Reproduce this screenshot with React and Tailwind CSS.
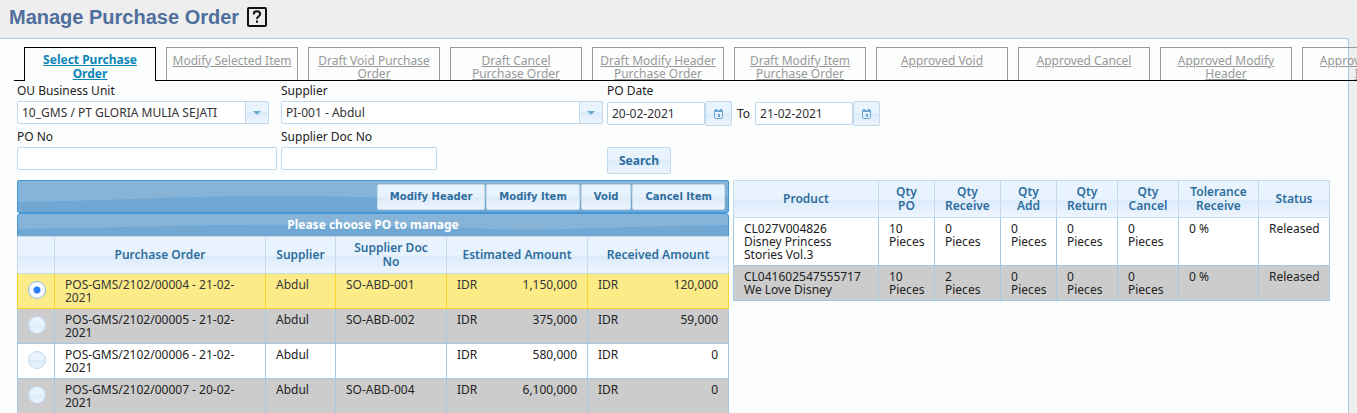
import { useState } from "react";

const TABS = [
    "Select Purchase Order",
    "Modify Selected Item",
    "Draft Void Purchase Order",
    "Draft Cancel Purchase Order",
    "Draft Modify Header Purchase Order",
    "Draft Modify Item Purchase Order",
    "Approved Void",
    "Approved Cancel",
    "Approved Modify Header",
    "Approved Modify Item",
];

const ORDERS = [
    { id: "POS-GMS/2102/00004 - 21-02-2021", supplier: "Abdul", doc: "SO-ABD-001", estimated: "1,150,000", received: "120,000" },
    { id: "POS-GMS/2102/00005 - 21-02-2021", supplier: "Abdul", doc: "SO-ABD-002", estimated: "375,000", received: "59,000" },
    { id: "POS-GMS/2102/00006 - 21-02-2021", supplier: "Abdul", doc: "", estimated: "580,000", received: "0" },
    { id: "POS-GMS/2102/00007 - 20-02-2021", supplier: "Abdul", doc: "SO-ABD-004", estimated: "6,100,000", received: "0" },
];

const PRODUCTS = [
    { code: "CL027V004826", name: "Disney Princess Stories Vol.3", po: 10, receive: 0, add: 0, ret: 0, cancel: 0, tolerance: "0 %", status: "Released" },
    { code: "CL041602547555717", name: "We Love Disney", po: 10, receive: 2, add: 0, ret: 0, cancel: 0, tolerance: "0 %", status: "Released" },
];

const glass = "bg-linear-to-b from-[#e9f3fd] from-50% via-[#dbebfa] via-50% to-[#eef5fe]";
const field = "h-[23px] w-full rounded-xs border border-[#c0d8ec] bg-white px-1 text-[#333] outline-none";
const th = `border border-[#c5dbec] px-1 py-1 text-center align-middle leading-[14px] font-semibold text-[#2e6e9e] ${glass}`;
const td = "border border-[#a6c9e2] px-[10px] py-1 align-top";

function HelpIcon() {
    return (
        <svg width="20" height="20" viewBox="0 0 20 20" fill="none" stroke="#111" strokeWidth="2">
            <rect x="1" y="1" width="18" height="18" rx="1" />
            <path d="M6.8 7.6V6.9C6.8 5.2 8.1 4.2 10 4.2s3.2 1 3.2 2.8c0 2.3-3.2 2.4-3.2 5" />
            <path d="M10 13.6v2.2" />
        </svg>
    );
}

function CalendarIcon() {
    return (
        <svg width="9" height="10" viewBox="0 0 9 10" fill="#6da8d5">
            <path d="M1 0h2v1h3V0h2v1h1v8H8v1H1V9H0V1h1zM1 3v6h7V3z" fillRule="evenodd" />
            <path d="M4 5h2v3H4z" />
        </svg>
    );
}

function Wave() {
    return (
        <svg className="absolute inset-0 h-full w-full" viewBox="0 0 710 32" preserveAspectRatio="none" aria-hidden="true">
            <path d="M0 21.5C80 21 150 16 250 15.5C340 15.5 410 18 500 23C580 22 620 17 710 16V32H0Z" fill="#70a8d3" />
        </svg>
    );
}

function Select({ id, label, value, className }) {
    return (
        <div className={className}>
            <label htmlFor={id} className="block">{label}</label>
            <div className="relative mt-1">
                <select id={id} className={`${field} appearance-none`}>
                    <option>{value}</option>
                </select>
                <span className={`pointer-events-none absolute inset-y-0 right-0 flex w-6 items-center justify-center rounded-r-xs border border-[#c0d8ec] ${glass}`}>
                    <svg width="8" height="4" viewBox="0 0 8 4" fill="#6da8d5"><path d="M0 0h8L4 4z" /></svg>
                </span>
            </div>
        </div>
    );
}

function DateField({ label, value }) {
    return (
        <div className="flex items-center">
            <input aria-label={label} defaultValue={value} className={`${field} max-w-[98px]`} />
            <button aria-label={`Pick ${label}`} className={`flex h-[25px] w-[27px] shrink-0 items-center justify-center rounded-xs border border-[#c0d8ec] ${glass}`}>
                <CalendarIcon />
            </button>
        </div>
    );
}

function Radio({ name, label, checked, onChange }) {
    return (
        <input
            type="radio"
            name={name}
            aria-label={label}
            checked={checked}
            onChange={onChange}
            className="block size-[18px] appearance-none rounded-full border border-[#bfd9ee] bg-linear-to-b from-[#e9f3fd] from-50% via-[#dbebfa] via-50% to-[#eef5fe] checked:border-[#8dbbe0] checked:bg-[radial-gradient(circle,#2a7dfb_3px,#f8fbff_4px)]"
        />
    );
}

function OrderTable() {
    const [selected, setSelected] = useState(0);

    return (
        <div>
            <div className="relative flex justify-end overflow-hidden rounded-xs border border-[#4297d7] bg-[#86b4d9] pt-[3px] pr-[3px] pb-[2px]">
                <Wave />
                <div className="relative flex gap-px">
                    {["Modify Header", "Modify Item", "Void", "Cancel Item"].map((action) => (
                        <button key={action} className={`h-[26px] rounded-xs border border-[#c5dbec] px-3 pb-[2px] font-['DejaVu_Sans',sans-serif] text-[10px] font-bold text-[#2e6e9e] ${glass}`}>
                            {action}
                        </button>
                    ))}
                </div>
            </div>
            <div className="relative overflow-hidden rounded-t-sm border border-b-0 border-[#4297d7] bg-[#86b4d9] text-center font-bold text-white">
                <Wave />
                <div className="relative py-1 leading-[14px]">Please choose PO to manage</div>
            </div>
            <table className="w-full table-fixed border-collapse">
                <colgroup>
                    <col className="w-[37px]" />
                    <col className="w-[211px]" />
                    <col className="w-[70px]" />
                    <col className="w-[111px]" />
                    <col className="w-[141px]" />
                    <col className="w-[141px]" />
                </colgroup>
                <thead>
                    <tr>
                        <th className={th}></th>
                        <th className={th}>Purchase Order</th>
                        <th className={th}>Supplier</th>
                        <th className={th}>Supplier Doc<br />No</th>
                        <th className={th}>Estimated Amount</th>
                        <th className={th}>Received Amount</th>
                    </tr>
                </thead>
                <tbody>
                    {ORDERS.map((o, i) => {
                        const active = i === selected;
                        const cell = active ? "border border-[#fad42e] px-[10px] py-1 align-top" : td;
                        const row = active ? "bg-[#fbec88] text-[#363636]" : i % 2 ? "bg-[#cccccc]" : "bg-white";
                        return (
                            <tr key={o.id} className={row}>
                                <td className={`${active ? "border-[#fad42e]" : "border-[#a6c9e2]"} border p-0 pt-[7px] align-top`}>
                                    <div className="flex justify-center pl-[2px]">
                                        <Radio name="order" label={o.id} checked={active} onChange={() => setSelected(i)} />
                                    </div>
                                </td>
                                <td className={cell}>{o.id}</td>
                                <td className={cell}>{o.supplier}</td>
                                <td className={cell}>{o.doc}</td>
                                <td className={cell}>
                                    <div className="flex justify-between"><span>IDR</span><span>{o.estimated}</span></div>
                                </td>
                                <td className={cell}>
                                    <div className="flex justify-between"><span>IDR</span><span>{o.received}</span></div>
                                </td>
                            </tr>
                        );
                    })}
                </tbody>
            </table>
        </div>
    );
}

function ProductTable() {
    return (
        <table className="w-full table-fixed border-collapse">
            <colgroup>
                <col className="w-[145px]" />
                <col className="w-[56px]" />
                <col className="w-[66px]" />
                <col className="w-[56px]" />
                <col className="w-[61px]" />
                <col className="w-[61px]" />
                <col className="w-[80px]" />
                <col className="w-[71px]" />
            </colgroup>
            <thead>
                <tr>
                    <th className={th}>Product</th>
                    <th className={th}>Qty<br />PO</th>
                    <th className={th}>Qty<br />Receive</th>
                    <th className={th}>Qty<br />Add</th>
                    <th className={th}>Qty<br />Return</th>
                    <th className={th}>Qty<br />Cancel</th>
                    <th className={th}>Tolerance<br />Receive</th>
                    <th className={th}>Status</th>
                </tr>
            </thead>
            <tbody>
                {PRODUCTS.map((p, i) => (
                    <tr key={p.code} className={i % 2 ? "bg-[#cccccc]" : "bg-white"}>
                        <td className={td}>{p.code}<br />{p.name}</td>
                        {[p.po, p.receive, p.add, p.ret, p.cancel].map((qty, n) => (
                            <td key={n} className={td}>{qty}<br />Pieces</td>
                        ))}
                        <td className={td}>{p.tolerance}</td>
                        <td className={td}>{p.status}</td>
                    </tr>
                ))}
            </tbody>
        </table>
    );
}

export default function App() {
    return (
        <div className="flex h-screen flex-col overflow-hidden bg-[#eeeeee] font-['Noto_Sans',sans-serif] text-xs leading-[13px] text-[#222]">
            <header className="flex h-[38px] shrink-0 items-center gap-2 px-[9px] pb-1">
                <h1 className="font-['Liberation_Sans',sans-serif] text-xl leading-6 font-bold text-[#4f6f9c]">Manage Purchase Order</h1>
                <HelpIcon />
            </header>

            <main className="mr-2 grow rounded-tr-sm border-t border-r border-[#a6c9e2] bg-[#fcfdfd] pt-2">
                <nav className="ml-[14px] flex w-max gap-[10px] border-b border-black pl-[10px]">
                    {TABS.map((tab, i) => (
                        <a
                            key={tab}
                            href="#"
                            className={
                                i === 0
                                    ? "-mb-px h-[34px] w-[132px] border border-b-0 border-black bg-[#fcfdfd] px-3 pt-[5px] text-center leading-[14px] font-bold text-[#0b86b8] underline"
                                    : "h-[33px] w-[132px] border border-b-0 border-[#999] px-1 pt-[6px] text-center text-[#999] underline"
                            }
                        >
                            {tab}
                        </a>
                    ))}
                </nav>

                <form className="flex pt-[3px] pl-[17px]" onSubmit={(e) => e.preventDefault()}>
                    <div className="w-[264px]">
                        <Select id="unit" label="OU Business Unit" value="10_GMS / PT GLORIA MULIA SEJATI" className="w-[252px]" />
                        <label htmlFor="po-no" className="mt-[6px] mb-1 block">PO No</label>
                        <input id="po-no" className={`${field} max-w-[260px]`} />
                    </div>
                    <div className="w-[326px]">
                        <Select id="supplier" label="Supplier" value="PI-001 - Abdul" className="w-[322px]" />
                        <label htmlFor="doc-no" className="mt-[6px] mb-1 block">Supplier Doc No</label>
                        <input id="doc-no" className={`${field} max-w-[156px]`} />
                    </div>
                    <div>
                        <div>PO Date</div>
                        <div className="mt-1 flex items-center gap-1">
                            <DateField label="date from" value="20-02-2021" />
                            <span className="px-px">To</span>
                            <DateField label="date to" value="21-02-2021" />
                        </div>
                        <button className={`mt-[21px] h-[27px] rounded-xs border border-[#c0d8ec] px-[11px] font-bold text-[#2e6e9e] ${glass}`}>
                            Search
                        </button>
                    </div>
                </form>

                <div className="mt-[6px] grid grid-cols-[712fr_597fr] items-start gap-1 pr-[18px] pl-[17px]">
                    <OrderTable />
                    <ProductTable />
                </div>
            </main>
        </div>
    );
}
